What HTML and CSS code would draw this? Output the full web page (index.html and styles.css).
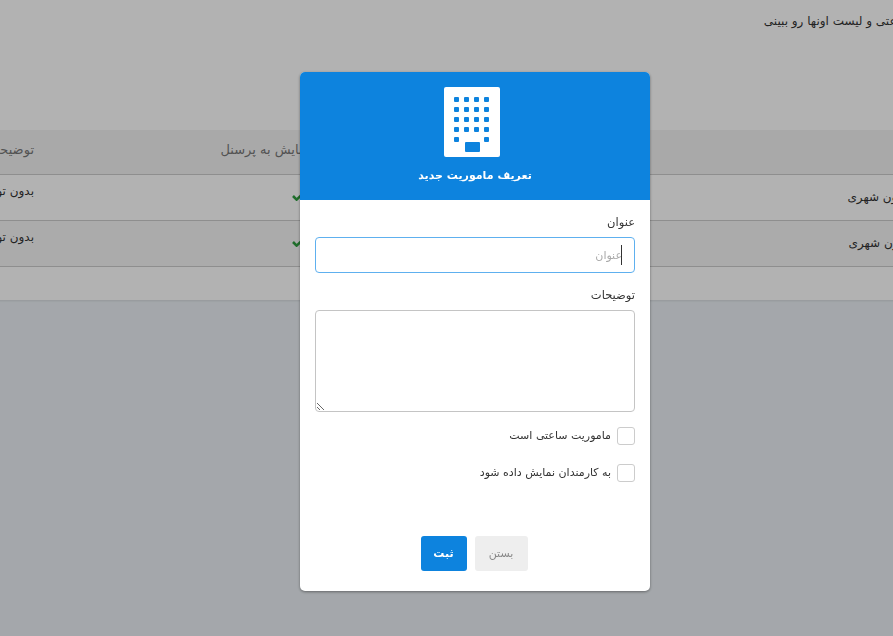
FILE: index.html
```html
<!DOCTYPE html>
<html lang="fa" dir="rtl">
  <head>
    <meta charset="UTF-8" />
    <title>تعریف ماموریت</title>
    <link rel="stylesheet" href="styles.css">
  </head>

  <body>
    <div class="page">
      <p class="intro">ماموریت های ساعتی و لیست اونها رو ببینی</p>

      <table class="list">
        <thead>
          <tr>
            <th class="col-title">عنوان</th>
            <th class="col-show">نمایش به پرسنل</th>
            <th class="col-desc">توضیحات</th>
          </tr>
        </thead>
        <tbody>
          <tr>
            <td class="name">ماموریت درون شهری</td>
            <td class="check">
              <svg width="13" height="10" viewBox="0 0 13 10"><path d="M1 5l3.6 3.6L12 1.6" fill="none" stroke="#2e9e3f" stroke-width="2.6" /></svg>
            </td>
            <td>بدون توضیحات</td>
          </tr>
          <tr class="even">
            <td class="name">ماموریت برون شهری</td>
            <td class="check">
              <svg width="13" height="10" viewBox="0 0 13 10"><path d="M1 5l3.6 3.6L12 1.6" fill="none" stroke="#2e9e3f" stroke-width="2.6" /></svg>
            </td>
            <td>بدون توضیحات</td>
          </tr>
        </tbody>
      </table>
      <div class="list-footer"></div>
    </div>

    <div class="overlay">
      <div class="modal">
        <div class="modal-header">
          <svg class="building" width="56" height="70" viewBox="0 0 56 70">
            <rect width="56" height="70" rx="2" fill="#fff" />
            <g fill="#0d83de">
              <rect x="10" y="10" width="5" height="5" rx="1" />
              <rect x="20" y="10" width="5" height="5" rx="1" />
              <rect x="30" y="10" width="5" height="5" rx="1" />
              <rect x="40" y="10" width="5" height="5" rx="1" />
              <rect x="10" y="20" width="5" height="5" rx="1" />
              <rect x="20" y="20" width="5" height="5" rx="1" />
              <rect x="30" y="20" width="5" height="5" rx="1" />
              <rect x="40" y="20" width="5" height="5" rx="1" />
              <rect x="10" y="30" width="5" height="5" rx="1" />
              <rect x="20" y="30" width="5" height="5" rx="1" />
              <rect x="30" y="30" width="5" height="5" rx="1" />
              <rect x="40" y="30" width="5" height="5" rx="1" />
              <rect x="10" y="40" width="5" height="5" rx="1" />
              <rect x="20" y="40" width="5" height="5" rx="1" />
              <rect x="30" y="40" width="5" height="5" rx="1" />
              <rect x="40" y="40" width="5" height="5" rx="1" />
              <rect x="10" y="50" width="5" height="5" rx="1" />
              <rect x="40" y="50" width="5" height="5" rx="1" />
              <rect x="21" y="55" width="15" height="10" rx="1" />
            </g>
          </svg>
          <h2>تعریف ماموریت جدید</h2>
        </div>

        <div class="modal-body">
          <label class="field-label" for="title">عنوان</label>
          <div class="input-wrap">
            <input type="text" id="title" placeholder="عنوان" />
            <span class="caret"></span>
          </div>

          <label class="field-label" for="desc">توضیحات</label>
          <textarea id="desc"></textarea>

          <div class="option option-first">
            <span class="box"></span>
            <span class="option-text">ماموریت ساعتی است</span>
          </div>
          <div class="option">
            <span class="box"></span>
            <span class="option-text">به کارمندان نمایش داده شود</span>
          </div>
        </div>

        <div class="modal-actions">
          <button class="btn-close">بستن</button>
          <button class="btn-save">ثبت</button>
        </div>
      </div>
    </div>
  </body>
</html>
```

FILE: styles.css
```css
html,
body {
  height: 100%;
}

body {
  font-family: "DejaVu Sans", "Noto Sans", sans-serif;
  font-size: 12px;
  color: #333;
  margin: 0;
  padding: 0;
  background-color: #ebf0f5;
  overflow: hidden;
}

.page {
  background-color: #fff;
  margin: 0 -100px;
  height: 300px;
  box-shadow: 0 1px 2px rgba(0, 0, 0, 0.1);
}

.intro {
  margin: 0;
  height: 130px;
  padding-top: 14px;
  padding-right: 12px;
  box-sizing: border-box;
  white-space: nowrap;
}

.list {
  width: 100%;
  border-collapse: collapse;
  table-layout: fixed;
}

.list th {
  height: 44px;
  padding: 0 0 4px;
  box-sizing: border-box;
  font-weight: normal;
  font-size: 13px;
  text-align: right;
  color: #777;
  background-color: #f3f3f3;
  border-bottom: 1px solid #ccc;
}

.list td {
  height: 46px;
  padding: 0 0 13px;
  box-sizing: border-box;
  border-bottom: 1px solid #ccc;
}

.list .even td {
  background-color: #f5f5f5;
}

.col-title {
  width: 683px;
}

.col-show {
  width: 276px;
}

.list td.name {
  padding: 0 37px 1px 0;
}

.list td.check {
  padding: 0 5px 0 0;
}

.list-footer {
  height: 34px;
}

.overlay {
  position: fixed;
  top: 0;
  left: 0;
  right: 0;
  bottom: 0;
  background-color: rgba(0, 0, 0, 0.3);
}

.modal {
  position: absolute;
  top: 72px;
  left: 300px;
  width: 350px;
  height: 519px;
  display: flex;
  flex-direction: column;
  font-size: 11px;
  background-color: #fff;
  border-radius: 5px;
  overflow: hidden;
  box-shadow: 0 1px 3px rgba(0, 0, 0, 0.4);
}

.modal-header {
  height: 128px;
  box-sizing: border-box;
  padding-top: 15px;
  display: flex;
  flex-direction: column;
  align-items: center;
  background-color: #0d83de;
  color: #fff;
}

.building {
  margin-right: 6px;
}

.modal-header h2 {
  margin: 12px 0 0;
  font-size: 11px;
  font-weight: bold;
}

.modal-body {
  flex: 1;
  display: flex;
  flex-direction: column;
  padding: 14px 15px 0;
}

.field-label {
  margin-bottom: 7px;
  line-height: 16px;
  font-size: 11.5px;
}

.input-wrap {
  position: relative;
  margin-bottom: 14px;
}

.input-wrap input {
  display: block;
  width: 100%;
  height: 36px;
  box-sizing: border-box;
  padding: 0 12px;
  border: 1px solid #5eb0ef;
  border-radius: 4px;
  font-family: inherit;
  font-size: 11px;
  outline: none;
}

.input-wrap input::placeholder {
  color: #aaa;
}

.caret {
  position: absolute;
  top: 8px;
  right: 13px;
  width: 1px;
  height: 20px;
  background-color: #333;
}

textarea {
  display: block;
  height: 102px;
  box-sizing: border-box;
  border: 1px solid #c4c4c4;
  border-radius: 4px;
  outline: none;
}

.option {
  display: flex;
  align-items: center;
  gap: 6px;
  margin-top: 19px;
  height: 18px;
}

.option-first {
  margin-top: 15px;
}

.option-text {
  padding-bottom: 2px;
}

.box {
  width: 18px;
  height: 18px;
  box-sizing: border-box;
  border: 1px solid #ccc;
  border-radius: 3px;
}

.modal-actions {
  display: flex;
  justify-content: center;
  gap: 8px;
  padding-bottom: 20px;
  padding-right: 2px;
}

.modal-actions button {
  height: 35px;
  border: none;
  border-radius: 3px;
  font-family: inherit;
  font-size: 11px;
}

.btn-close {
  width: 53px;
  background-color: #eee;
  color: #888;
}

.btn-save {
  width: 46px;
  background-color: #0d83de;
  color: #fff;
  font-weight: bold;
}
```
